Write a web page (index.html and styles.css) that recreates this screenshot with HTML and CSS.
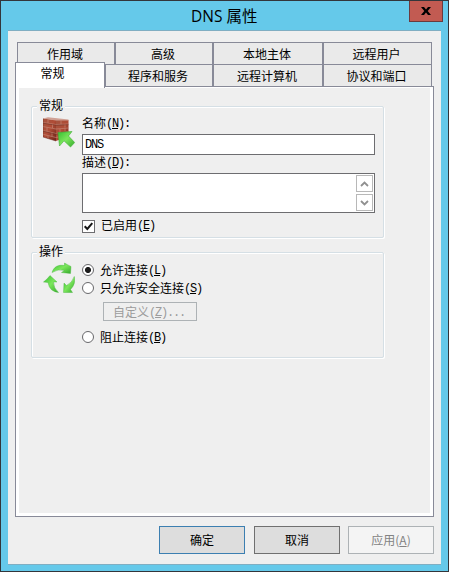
FILE: index.html
```html
<!DOCTYPE html>
<html lang="zh-CN">
<head>
<meta charset="utf-8">
<title>DNS 属性</title>
<link rel="stylesheet" href="styles.css">
</head>
<body>
<div class="window">
  <header class="titlebar">
    <h1 class="title">DNS 属性</h1>
    <button class="close" aria-label="关闭"><svg width="10" height="8" viewBox="0 0 10 8"><path d="M0 0h3l2 2.500L7 0h3L6.700 4 10 8H7L5 5.500 3 8H0l3.300-4z"/></svg></button>
  </header>
  <main class="client">
    <nav class="tabs">
      <div class="tab-row back">
        <span class="tab">作用域</span><span class="tab">高级</span><span class="tab">本地主体</span><span class="tab">远程用户</span>
      </div>
      <div class="tab-row front">
        <span class="tab selected">常规</span><span class="tab">程序和服务</span><span class="tab">远程计算机</span><span class="tab">协议和端口</span>
      </div>
    </nav>
    <section class="panel">
      <div class="group general">
        <h2 class="legend">常规</h2>
        <svg class="icon" width="32" height="32" viewBox="0 0 32 32">
          <defs>
            <linearGradient id="brick" x2="1" y2="1"><stop stop-color="#a4543f"/><stop offset=".5" stop-color="#b04c36"/><stop offset="1" stop-color="#6c2519"/></linearGradient>
            <linearGradient id="green" x2="1" y2="1"><stop stop-color="#35bd31"/><stop offset=".5" stop-color="#7be65b"/><stop offset="1" stop-color="#35aa2c"/></linearGradient>
          </defs>
          <path fill="url(#brick)" d="M0 2.500 13 4V25L0 21z"/>
          <path fill="url(#brick)" d="M13 4 25.500 4V20L13 25z"/>
          <path fill="#cfa094" d="M0 2.500 5 1.200 25.500 3.500V4.500L13 4.500z"/>
          <path fill="none" stroke="#c98f7d" stroke-width=".6" d="M0 6.500 13 8.500 25.500 8M0 10.500 13 13 25.500 12M0 14.500 13 17.500 25.500 15.500M0 18.300 13 21.500 25.500 18.500M5 3.500v3.500M9.500 8v4M4 11.500v4M9 16.500v4M5 20v3M18 4.500v4M22 8v3.500M17 13v4M22 12v3"/>
          <path fill="none" stroke="#642a20" stroke-width=".5" d="M0 2.500V21L13 25M0 7.200 13 9.200 25.500 8.700M0 15.200 13 18.200 25.500 16.200"/>
          <path fill="url(#green)" stroke="#42ad35" stroke-width=".6" d="M15 16.500 29 15.500 25.500 20 31.700 26.500 27.500 31 21 24.800 16.500 30z"/>
        </svg>
        <div class="fields">
          <label class="line">名称<span class="en">(<u>N</u>):</span></label>
          <div class="input"><span class="en">DNS</span></div>
          <label class="line desc">描述<span class="en">(<u>D</u>):</span></label>
          <div class="textarea">
            <div class="scroll">
              <span class="arrow"><svg width="9" height="6" viewBox="0 0 9 6"><path d="M1 5 4.500 1.500 8 5"/></svg></span>
              <span class="arrow"><svg width="9" height="6" viewBox="0 0 9 6"><path d="M1 1 4.500 4.500 8 1"/></svg></span>
            </div>
          </div>
          <label class="option enabled"><span class="check"><svg width="11" height="11" viewBox="0 0 11 11"><path d="M1.700 5.300 4.300 8 9.300 2.200"/></svg></span><span class="text">已启用<span class="en">(<u>E</u>)</span></span></label>
        </div>
      </div>
      <div class="group action">
        <h2 class="legend">操作</h2>
        <svg class="icon" width="32" height="32" viewBox="0 0 32 32">
          <g fill="url(#green)" stroke="#40b436" stroke-width=".4">
            <path d="M9 10.500C11 4.500 15 2.500 21.500 3.500L21.500 1Q25 3 28 4.500L27.500 11.500 18.500 10.500 21.500 8.500Q15 6.500 9 10.500z"/>
            <path d="M7 13.500 14 20 10.500 20Q10.500 26 15.500 30.500 6.500 29.500 5 20.500L.5 20Q4 17.500 7 13.500z"/>
            <path d="M31.300 14.500Q33 22 27.500 27.500L29.500 30.500H20.500L21 21 23.500 23.500Q29 21 31.300 14.500z"/>
          </g>
        </svg>
        <div class="fields">
          <label class="option"><span class="radio on"></span><span class="text">允许连接<span class="en">(<u>L</u>)</span></span></label>
          <label class="option"><span class="radio"></span><span class="text">只允许安全连接<span class="en">(<u>S</u>)</span></span></label>
          <button class="custom">自定义<span class="en">(<u>Z</u>)...</span></button>
          <label class="option"><span class="radio"></span><span class="text">阻止连接<span class="en">(<u>B</u>)</span></span></label>
        </div>
      </div>
    </section>
    <footer class="buttons">
      <button class="button default">确定</button>
      <button class="button">取消</button>
      <button class="button disabled">应用(<u>A</u>)</button>
    </footer>
  </main>
</div>
</body>
</html>
```
FILE: styles.css
```css
* { box-sizing: border-box; }
body {
  margin: 0;
  font: 12px/18px "Noto Sans CJK SC", sans-serif;
  color: #000;
}
button { font: inherit; margin: 0; padding: 0; border-radius: 0; }
u { text-underline-offset: 1px; text-decoration-thickness: 1px; }
.window {
  width: 449px;
  height: 572px;
  border: 1px solid #33363b;
  background: #65c9ea;
  padding: 0 7px 6px;
  display: flex;
  flex-direction: column;
}
.titlebar {
  height: 29px;
  display: flex;
  justify-content: flex-end;
  align-items: flex-start;
}
.title {
  flex: 1;
  margin: 0 0 0 183px;
  font: 15.5px/30px "Open Sans", "Noto Sans CJK SC", sans-serif;
  white-space: nowrap;
}
.close {
  width: 34px;
  height: 21px;
  margin-right: -2px;
  border: 1px solid #6b3a3e;
  border-top: 0;
  background: #c25b52;
  display: flex;
  align-items: center;
  justify-content: center;
}
.client {
  flex: 1;
  border-top: 1px solid #80aec2;
  border-bottom: 1px solid #80aec2;
  background: #efefef;
  padding: 11px 7px 0;
  display: flex;
  flex-direction: column;
}
.tabs { padding: 0 2px; }
.tab-row { display: grid; height: 22px; }
.tab-row.back { grid-template-columns: 98px 98px 110px 109px; }
.tab-row.front { grid-template-columns: 88px 108px 110px 109px; }
.tab {
  border: 1px solid #888a98;
  border-bottom: 0;
  padding-right: 2px;
  background: #eaeaea;
  text-align: center;
  line-height: 21px;
}
.tab + .tab { box-shadow: -1px 0 #888a98; }
.front .tab.selected + .tab { box-shadow: none; }
.front .tab { padding-right: 2px; }
.front .tab.selected {
  position: relative;
  z-index: 1;
  width: 90px;
  height: 26px;
  margin: -2px 0 0 -2px;
  padding-right: 15px;
  background: #fff;
  line-height: 19px;
}
.panel {
  height: 431px;
  border: 1px solid #888a98;
  background: #efefef;
  box-shadow: inset 3px 0 #fff, inset -3px 0 #fff, inset 0 1px #fff, inset 0 -3px #fff;
  padding: 19px 49px 0 15px;
}
.group {
  border: 1px solid #d5dfe5;
  border-radius: 2px;
  box-shadow: 1px 1px 0 #fff, inset 1px 1px 0 #fff;
  display: grid;
  grid-template-columns: 39px 293px;
  grid-template-rows: 9px auto;
  padding-left: 11px;
}
.general { height: 132px; }
.action { height: 106px; margin-top: 14px; }
.legend {
  grid-column: 1 / 3;
  justify-self: start;
  margin: -10px 0 0 -6px;
  padding: 0 2px;
  height: 16px;
  font-size: 12px;
  font-weight: 400;
  line-height: 15px;
  background: #efefef;
}
.fields { display: flex; flex-direction: column; align-items: flex-start; }
.line { height: 18px; line-height: 14px; }
.line.desc { line-height: 13px; }
.en {
  position: relative;
  top: -1px;
  font-family: "Liberation Mono", monospace;
  font-size: 12px;
  line-height: 1;
  letter-spacing: -1.2px;
}
.input {
  width: 293px;
  height: 21px;
  border: 1px solid #6d6d70;
  background: #fff;
  padding-left: 2px;
  line-height: 17px;
}
.textarea {
  width: 293px;
  height: 40px;
  border: 1px solid #6d6d70;
  background: #fff;
  padding: 1px;
  display: flex;
  justify-content: flex-end;
}
.scroll { width: 17px; display: grid; gap: 2px; grid-template-rows: 17px 17px; }
.arrow { border: 1px solid #b8b8b8; display: flex; align-items: center; justify-content: center; }
.arrow path { fill: none; stroke: #909090; stroke-width: 1.8; }
.option { display: flex; align-items: center; height: 18px; }
.text { line-height: 16px; padding-bottom: 2px; }
.action .text { padding-bottom: 0; }
.enabled { margin-top: 4px; }
.check {
  width: 13px;
  height: 13px;
  margin-right: 6px;
  border: 1px solid #6d6d70;
  background: #fff;
  display: flex;
}
.check path { fill: none; stroke: #161616; stroke-width: 2; }
.icon { display: block; }
.radio {
  width: 12px;
  height: 12px;
  margin-right: 6px;
  border: 1px solid #68686b;
  border-radius: 50%;
  background: #fff;
}
.radio.on { background: radial-gradient(circle, #1d1d1d 2.7px, #fff 3.3px); }
.action .fields { margin-top: -1px; }
.action .option:last-child { margin-top: 7px; }
.custom {
  width: 94px;
  height: 19px;
  margin: 5px 0 0 21px;
  padding-left: 9px;
  border: 1px solid #adb2b5;
  background: #efefef;
  color: #9c9c9c;
  line-height: 16px;
  text-align: left;
}
.buttons { display: flex; justify-content: flex-end; padding-top: 9px; }
.button {
  width: 86px;
  height: 28px;
  margin-left: 9px;
  border: 1px solid #707070;
  background: #ddd;
  color: #000;
  line-height: 26px;
}
.button.default { border-color: #3c7fb1; }
.button.disabled { margin-left: 8px; border-color: #adb2b5; background: #f4f4f4; color: #838383; }
```
